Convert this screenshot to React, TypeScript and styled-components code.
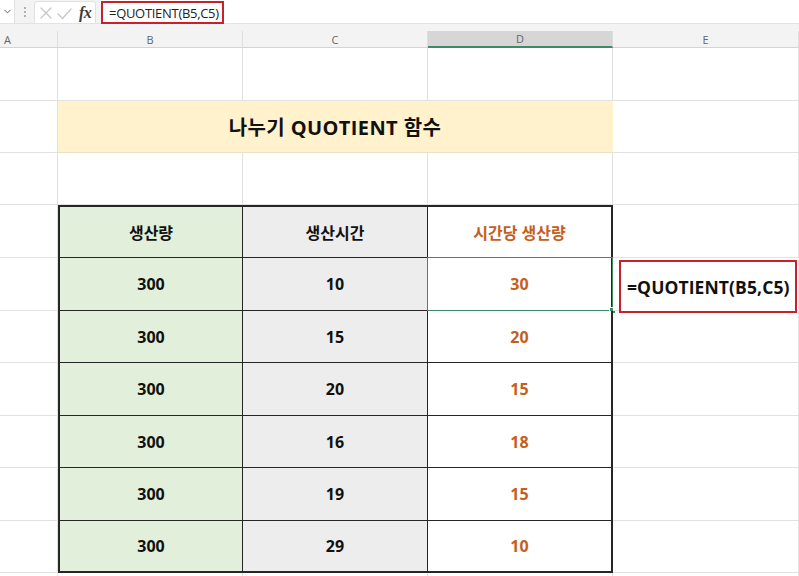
import React from 'react';
import styled, { createGlobalStyle } from 'styled-components';
import { ChevronDown } from 'lucide-react';

const GlobalStyle = createGlobalStyle`
  html, body {
    margin: 0;
    padding: 0;
    background: #ffffff;
    overflow: hidden;
  }
  body {
    font-family: "Open Sans", "Noto Sans CJK KR", sans-serif;
  }
`;

const COLS = '58px 185px 185px 185px 186px';
const ROWS = [53, 52, 52, 53, 53, 52, 53, 52, 53, 52, 8];

const production = [
  { amount: 300, hours: 10, result: 30 },
  { amount: 300, hours: 15, result: 20 },
  { amount: 300, hours: 20, result: 15 },
  { amount: 300, hours: 16, result: 18 },
  { amount: 300, hours: 19, result: 15 },
  { amount: 300, hours: 29, result: 10 },
];

const Page = styled.div`
  width: 799px;
  height: 576px;
  overflow: hidden;
  background: #fff;
`;

const Toolbar = styled.div`
  height: 24px;
  background: #f3f3f3;
  border-bottom: 1px solid #e3e3e3;
  box-sizing: border-box;
  display: flex;
  align-items: stretch;
`;

const NameBox = styled.div`
  width: 15px;
  background: #fff;
  border-right: 1px solid #e2e2e2;
  display: flex;
  align-items: center;
  justify-content: flex-start;
  padding-left: 2px;
  box-sizing: border-box;
  color: #555;
`;

const Dots = styled.div`
  width: 19px;
  display: flex;
  flex-direction: column;
  align-items: center;
  justify-content: center;
  gap: 2px;

  span {
    width: 2px;
    height: 2px;
    border-radius: 1px;
    background: #9a9a9a;
  }
`;

const FuncBox = styled.div`
  width: 62px;
  margin: 1px 0 0;
  background: #fff;
  border: 1px solid #e2e2e2;
  border-bottom: none;
  border-radius: 4px 4px 0 0;
  box-sizing: border-box;
  display: flex;
  align-items: center;
  padding: 0;

  svg {
    flex-shrink: 0;
  }
`;

const Fx = styled.span`
  margin-left: 4px;
  font-family: "Liberation Serif", serif;
  font-style: italic;
  font-weight: bold;
  font-size: 16px;
  color: #3c3c3c;
  letter-spacing: -0.5px;
`;

const FormulaInput = styled.div`
  flex: 1;
  margin-left: 5px;
  background: #fff;
  display: flex;
  align-items: stretch;
`;

const FormulaMark = styled.div`
  margin-top: 1px;
  height: 23px;
  box-sizing: border-box;
  border: 2px solid #c9202e;
  padding: 0 3px 0 6px;
  display: flex;
  align-items: center;
  font-size: 13px;
  color: #222;
  letter-spacing: -0.3px;
`;

const Gap = styled.div`
  height: 7px;
  background: #f3f3f3;
`;

const HeaderRow = styled.div`
  display: grid;
  grid-template-columns: ${COLS};
  height: 17px;
  background: #f3f3f3;
`;

const ColHead = styled.div<{ $active?: boolean; $align?: string }>`
  box-sizing: border-box;
  display: flex;
  align-items: center;
  justify-content: ${p => p.$align || 'center'};
  padding-left: ${p => (p.$align ? '4px' : '0')};
  font-size: 11px;
  color: #666666;
  border-right: 1px solid #dedede;
  background: ${p => (p.$active ? '#d6d6d6' : '#f3f3f3')};
  border-bottom: ${p => (p.$active ? '2px solid #3f8a62' : '1px solid #d4d4d4')};
`;

const Sheet = styled.div`
  display: grid;
  grid-template-columns: ${COLS};
  grid-template-rows: ${ROWS.map(h => `${h}px`).join(' ')};
`;

const Cell = styled.div<{ $span?: number; $bg?: string }>`
  box-sizing: border-box;
  grid-column: span ${p => p.$span || 1};
  border-right: 1px solid #e1e1e1;
  border-bottom: 1px solid #e1e1e1;
  background: ${p => p.$bg || '#fff'};
  display: flex;
  align-items: center;
  justify-content: center;
`;

const Title = styled(Cell)`
  background: #fff2cc;
  border-right: 1px solid #fff2cc;
  border-bottom: 1px solid #e6e0cc;
  font-weight: 700;
  font-size: 20px;
  letter-spacing: 0.4px;
  color: #111;
`;

const TableCell = styled.div<{
  $bg: string;
  $orange?: boolean;
  $left?: boolean;
  $right?: boolean;
  $top?: boolean;
  $bottom?: boolean;
}>`
  position: relative;
  box-sizing: border-box;
  background: ${p => p.$bg};
  border-right: ${p => (p.$right ? 2 : 1)}px solid #262626;
  border-bottom: ${p => (p.$bottom ? 2 : 1)}px solid #262626;
  border-left: ${p => (p.$left ? '2px solid #262626' : 'none')};
  border-top: ${p => (p.$top ? '2px solid #262626' : 'none')};
  display: flex;
  align-items: center;
  justify-content: center;
  font-weight: 700;
  font-size: 16px;
  color: ${p => (p.$orange ? '#c65e1c' : '#111')};
`;

const Selection = styled.div`
  position: absolute;
  inset: -1px -2px -1px -1px;
  border: 1.5px solid #3f8a62;
  pointer-events: none;

  &::after {
    content: '';
    position: absolute;
    right: -4px;
    bottom: -4px;
    width: 5px;
    height: 5px;
    background: #3f8a62;
    border: 1px solid #fff;
  }
`;

const CalloutCell = styled(Cell)`
  position: relative;
  justify-content: flex-start;
  align-items: flex-start;
`;

const Callout = styled.div`
  position: absolute;
  left: 6px;
  top: 2px;
  width: 178px;
  height: 53px;
  box-sizing: border-box;
  border: 2.5px solid #c9202e;
  display: flex;
  align-items: center;
  padding-left: 6px;
  font-weight: 700;
  font-size: 17.5px;
  letter-spacing: 0.1px;
  color: #111;
  white-space: nowrap;
  background: #fff;
`;

const CancelEnter = () => (
  <svg width="40" height="22" viewBox="0 0 40 22" fill="none" stroke="#c6c6c6" strokeWidth="1.2" strokeLinecap="round" strokeLinejoin="round">
    <path d="M6 6 L16 16 M16 6 L6 16" />
    <path d="M23 12 L27.5 16.5 L36 7" />
  </svg>
);

const Blank = () => <Cell />;

const App: React.FC = () => {
  const last = production.length - 1;

  return (
    <Page>
      <GlobalStyle />
      <Toolbar>
        <NameBox>
          <ChevronDown size={11} strokeWidth={2} />
        </NameBox>
        <Dots>
          <span />
          <span />
          <span />
        </Dots>
        <FuncBox>
          <CancelEnter />
          <Fx>fx</Fx>
        </FuncBox>
        <FormulaInput>
          <FormulaMark>=QUOTIENT(B5,C5)</FormulaMark>
        </FormulaInput>
      </Toolbar>
      <Gap />
      <HeaderRow>
        <ColHead $align="flex-start">A</ColHead>
        <ColHead>B</ColHead>
        <ColHead>C</ColHead>
        <ColHead $active>D</ColHead>
        <ColHead>E</ColHead>
      </HeaderRow>
      <Sheet>
        {/* row 1 */}
        <Blank /><Blank /><Blank /><Blank /><Blank />
        {/* row 2 */}
        <Blank />
        <Title $span={3}>나누기 QUOTIENT 함수</Title>
        <Blank />
        {/* row 3 */}
        <Blank /><Blank /><Blank /><Blank /><Blank />
        {/* row 4: table head */}
        <Blank />
        <TableCell $bg="#e2efda" $left $top>생산량</TableCell>
        <TableCell $bg="#ededed" $top>생산시간</TableCell>
        <TableCell $bg="#ffffff" $top $right $orange>시간당 생산량</TableCell>
        <Blank />
        {production.map((row, i) => (
          <React.Fragment key={i}>
            <Blank />
            <TableCell $bg="#e2efda" $left $bottom={i === last}>
              {row.amount}
            </TableCell>
            <TableCell $bg="#ededed" $bottom={i === last}>
              {row.hours}
            </TableCell>
            <TableCell $bg="#ffffff" $right $orange $bottom={i === last}>
              {row.result}
              {i === 0 && <Selection />}
            </TableCell>
            {i === 0 ? (
              <CalloutCell>
                <Callout>=QUOTIENT(B5,C5)</Callout>
              </CalloutCell>
            ) : (
              <Blank />
            )}
          </React.Fragment>
        ))}
        {/* row 11 */}
        <Blank /><Blank /><Blank /><Blank /><Blank />
      </Sheet>
    </Page>
  );
};

export default App;
